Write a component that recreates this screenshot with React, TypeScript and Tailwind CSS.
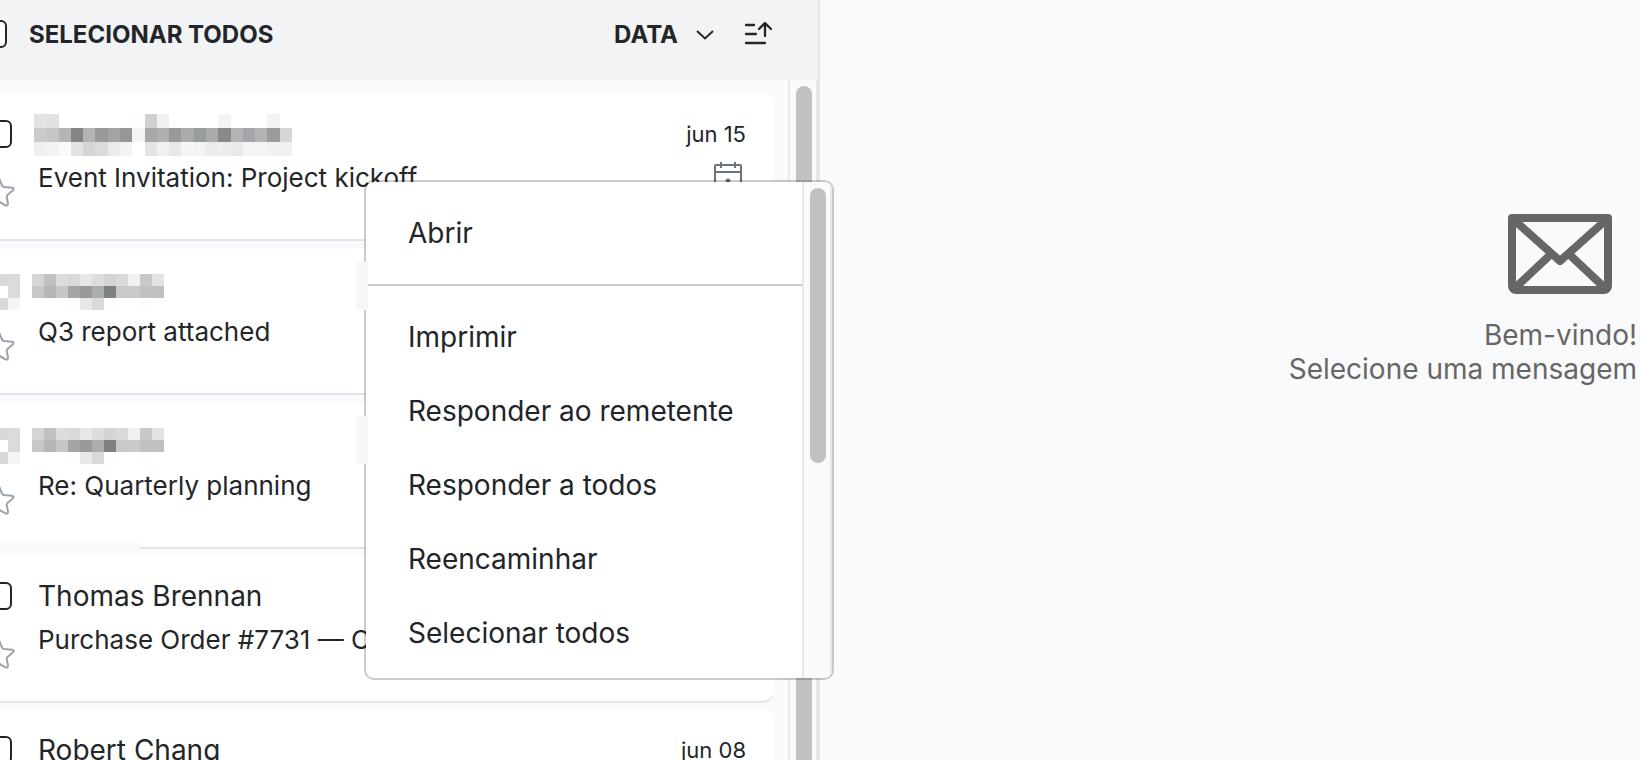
import React from "react";

interface Message {
  id: string;
  sender?: string;
  redacted?: "long" | "short";
  subject: string;
  date?: string;
  event?: boolean;
}

const messages: Message[] = [
  { id: "m1", redacted: "long", subject: "Event Invitation: Project kickoff", date: "jun 15", event: true },
  { id: "m2", redacted: "short", subject: "Q3 report attached" },
  { id: "m3", redacted: "short", subject: "Re: Quarterly planning" },
  { id: "m4", sender: "Thomas Brennan", subject: "Purchase Order #7731 — C" },
  { id: "m5", sender: "Robert Chang", subject: "", date: "jun 08" },
];

const menuItems = ["Imprimir", "Responder ao remetente", "Responder a todos", "Reencaminhar", "Selecionar todos"];

// Rows of hex colours, "-" leaves the cell empty
const longMosaic = [
  "e3e3e3 e1e1e1 - - - - - - fdfdfd d0d0d0 f1f1f1 - - - - f3f5f4 - - - f3f3f3 -",
  "c9caca c6c6c6 b4b5b7 858587 b3b5b4 98999b a2a3a5 969799 f4f4f4 a8a9ad aeafb1 98999d a9abac 999c9d aaabad 88898b b3b4b8 a5a6aa b3b5b4 9b9c9c d6d6d6",
  "efefef f1f3f2 f8f9f9 e2e4e3 d5d5d5 dadbdb ebebeb f3f3f3 - e4e4e4 f1f1f1 e8e8e8 f4f6f5 f3f3f3 eaebeb ededed e8eaea f5f5f5 f5f5f5 f1f1f1 f0f0f0",
];
const shortMosaic = [
  "d4d6d5 c0c0c0 dadddc d9d9d9 e5e8e7 dddddd d3d5d4 d8dada f1f1f1 c8c8c8 e3e3e3",
  "c7c7c7 b4b6b5 c5c7c6 a3a4a6 98999b abacae 7d8181 c8c9cb cacaca c1c3c2 bfc0c2",
  "- - - fdfdfd e8e8e8 d9d9d9 fdfdfd - - fdfdfd -",
];
const boxMosaic = ["d8d8d8 dbdbdb", "ffffff dbdbdb", "d8d8d8 f5f5f5"];

function Mosaic({ rows, className }: { rows: string[]; className: string }) {
  const cells = rows.map((r) => r.split(" "));
  return (
    <svg
      className={className}
      viewBox={`0 0 ${cells[0].length} ${cells.length}`}
      preserveAspectRatio="none"
      shapeRendering="crispEdges"
      aria-hidden="true"
    >
      {cells.map((row, y) =>
        row.map((c, x) => (c === "-" ? null : <rect key={`${x}-${y}`} x={x} y={y} width="1" height="1" fill={`#${c}`} />))
      )}
    </svg>
  );
}

function CheckBox({ id, label }: { id: string; label: string }) {
  return (
    <input
      id={id}
      type="checkbox"
      aria-label={label}
      className="size-7 shrink-0 appearance-none rounded-md border-2 border-[#232629] bg-white"
    />
  );
}

function StarIcon() {
  return (
    <svg width="40" height="40" viewBox="0 0 40 40" fill="none" stroke="#9ca3af" strokeWidth="2" strokeLinejoin="round">
      <path d="M20 3 L26 17.500 Q26.500 18.700 28 19 L36 19.700 Q38.500 20.300 37 22.200 L31.500 27 Q30.500 28 30.800 29.500 L32 35.500 Q32 38.300 29.500 37.300 L20 32 L10.500 37.300 Q8 38.300 8 35.500 L9.200 29.500 Q9.500 28 8.500 27 L3 22.200 Q1.500 20.300 4 19.700 L12 19 Q13.500 18.700 14 17.500 Z" />
    </svg>
  );
}

function CalendarIcon() {
  return (
    <svg width="28" height="30" viewBox="0 0 28 30" fill="none" stroke="#6b7280" strokeWidth="2">
      <rect x="1" y="3" width="26" height="25" rx="1" />
      <path d="M1 10h26M7 0v6M21 0v6" />
      <circle cx="14" cy="19" r="1.500" fill="#6b7280" />
    </svg>
  );
}

function SortIcon() {
  return (
    <svg width="28" height="24" viewBox="0 0 28 24" fill="none" stroke="#232629" strokeWidth="2.300" strokeLinecap="round">
      <path d="M2 3h8M2 12h10M2 21h19" />
      <path d="M21 14V1.500M15 7l6-6 6 6" strokeLinejoin="round" />
    </svg>
  );
}

function EnvelopeIcon() {
  return (
    <svg className="mr-[25px]" width="104" height="80" viewBox="0 0 104 80" fill="none" stroke="#666666" strokeWidth="8">
      <path d="M4 4H100V72a4 4 0 0 1-4 4H8a4 4 0 0 1-4-4Z" strokeLinejoin="round" />
      <path d="M6 6L52 47L98 6M6 75L41 42M98 75L63 42" strokeLinejoin="round" />
    </svg>
  );
}

function MessageRow({ message }: { message: Message }) {
  const short = message.redacted === "short";
  return (
    <li className="flex h-[147px] shrink-0 rounded-r-xl border-b-2 border-[#e2e6eb] bg-white pt-[18px] pr-7">
      <div className="-ml-4 flex w-[54px] shrink-0 flex-col">
        <div className="flex h-11 items-center">
          {short ? (
            <Mosaic rows={boxMosaic} className="mt-2 ml-3 h-9 w-6" />
          ) : (
            <CheckBox id={message.id} label={message.sender ?? message.subject} />
          )}
        </div>
        <button type="button" aria-label="Favorito" className="-ml-2 mt-3 w-10">
          <StarIcon />
        </button>
      </div>
      <div className="min-w-0 flex-1">
        <div className="flex h-11 items-center justify-between">
          {message.redacted === "long" && <Mosaic rows={longMosaic} className="-ml-1 mt-0.5 h-[42px] w-[258px]" />}
          {short && <Mosaic rows={shortMosaic} className="-ml-1.5 mt-2 h-9 w-[132px]" />}
          {message.sender && <span className="text-[28px] leading-[44px]">{message.sender}</span>}
          {message.date && <time className="text-[22px] leading-[44px]">{message.date}</time>}
        </div>
        <div className="flex items-start justify-between">
          <span className="text-[26px] leading-[44px] whitespace-nowrap">{message.subject}</span>
          {message.event && (
            <span className="mt-1.5 mr-1">
              <CalendarIcon />
            </span>
          )}
        </div>
      </div>
    </li>
  );
}

function ScrollTrack({ children }: { children: React.ReactNode }) {
  return (
    <div className="flex w-[30px] shrink-0 flex-col border-x-2 border-[#e8e8e8] bg-[#fafafa] pt-1.5 pl-1.5">
      {children}
    </div>
  );
}

function ContextMenu() {
  return (
    <div className="absolute top-[180px] left-[364px] flex h-[500px] w-[470px] rounded-[10px] border-2 border-black/20 bg-white bg-clip-padding">
      <div role="menu" className="flex flex-1 flex-col overflow-hidden pt-3.5 text-[28px] text-[#212529]">
        <button type="button" role="menuitem" className="h-[74px] shrink-0 px-[42px] text-left">
          Abrir
        </button>
        <hr className="my-3.5 ml-0.5 border-t-2 border-[#cccccc]" />
        {menuItems.map((item) => (
          <button key={item} type="button" role="menuitem" className="h-[74px] shrink-0 px-[42px] text-left">
            {item}
          </button>
        ))}
      </div>
      <div className="flex overflow-hidden rounded-r-lg">
        <ScrollTrack>
          <div className="h-[275px] w-4 rounded-full bg-[#c1c1c1]" />
        </ScrollTrack>
      </div>
      <div className="absolute top-20 -left-2.5 h-12 w-3 bg-[#f7f7f7]" />
      <div className="absolute top-[234px] -left-2.5 h-12 w-3 bg-[#f7f7f7]" />
    </div>
  );
}

export default function App() {
  return (
    <div className="relative flex h-screen overflow-hidden bg-[#f9fafc] font-['Inter',sans-serif] text-[#232629]">
      <section className="flex w-1/2 flex-col overflow-hidden border-r-2 border-[#e2e6eb]">
        <header className="flex h-20 shrink-0 items-center justify-between bg-[#f2f3f5] pr-[46px] pb-3 text-2xl font-bold">
          <div className="-ml-[21px] flex items-center gap-[22px]">
            <CheckBox id="all" label="Selecionar todos" />
            <label htmlFor="all" className="pt-0.5">
              SELECIONAR TODOS
            </label>
          </div>
          <div className="flex items-center gap-[30px]">
            <button type="button" className="flex items-center gap-[18px] pt-0.5">
              DATA
              <svg width="18" height="10" viewBox="0 0 18 10" fill="none" stroke="#232629" strokeWidth="2">
                <path d="M1 1l8 7.500 8-7.500" />
              </svg>
            </button>
            <button type="button" aria-label="Ordenar">
              <SortIcon />
            </button>
          </div>
        </header>
        <div className="flex min-h-0 flex-1">
          <ul className="flex flex-1 flex-col gap-[7px] overflow-hidden pt-3.5 pr-3.5">
            {messages.map((m) => (
              <MessageRow key={m.id} message={m} />
            ))}
          </ul>
          <ScrollTrack>
            <div className="w-4 flex-1 rounded-t-full bg-[#c1c1c1]" />
          </ScrollTrack>
        </div>
      </section>
      <main className="flex flex-1 flex-col items-end pt-[214px] pr-[3px] text-[28px] leading-[34px] text-[#666666]">
        <EnvelopeIcon />
        <p className="mt-6">Bem-vindo!</p>
        <p>Selecione uma mensagem</p>
      </main>
      <div className="absolute top-[541px] left-0 h-[15px] w-[140px] bg-[#fafafa]" />
      <ContextMenu />
    </div>
  );
}
